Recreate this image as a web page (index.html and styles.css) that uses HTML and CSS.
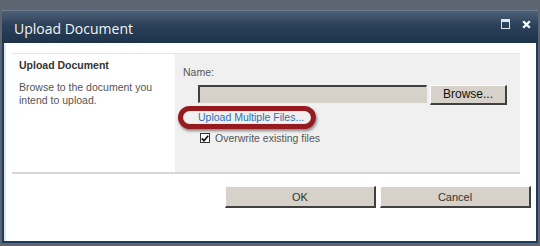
FILE: index.html
```html
<!DOCTYPE html>
<html lang="en">

<head>
    <meta charset="UTF-8">
    <title>Upload Document</title>
    <link rel="stylesheet" href="styles.css">
</head>

<body>

    <div class="dialog">
        <!-- Title bar -->
        <div class="titlebar">
            <span class="title">Upload Document</span>
            <span class="title-icons">
                <svg width="9" height="10" viewBox="0 0 9 10">
                    <rect x="0.5" y="0.5" width="8" height="9" fill="none" stroke="#dfe5eb" stroke-width="1"/>
                    <rect x="0.5" y="0.5" width="8" height="2.5" fill="#dfe5eb"/>
                </svg>
                <svg width="9" height="9" viewBox="0 0 9 9">
                    <path d="M1.2 1.2 L7.8 7.8 M7.8 1.2 L1.2 7.8" stroke="#ffffff" stroke-width="2.3"/>
                </svg>
            </span>
        </div>

        <div class="content">
            <div class="section">
                <div class="section-desc">
                    <h3>Upload Document</h3>
                    <p>Browse to the document you intend to upload.</p>
                </div>
                <div class="section-body">
                    <label for="file">Name:</label>
                    <div class="file-row">
                        <input type="text" id="file" class="file-box">
                        <button class="browse">Browse...</button>
                    </div>
                    <div class="link-row">
                        <a href="#" class="multi-link">Upload Multiple Files...</a>
                        <span class="highlight"></span>
                    </div>
                    <div class="check-row">
                        <span class="check">
                            <svg width="8" height="7" viewBox="0 0 8 7">
                                <path d="M0.8 3.4 L3 5.7 L7.2 0.8" fill="none" stroke="#111" stroke-width="1.7"/>
                            </svg>
                        </span>
                        <span>Overwrite existing files</span>
                    </div>
                </div>
            </div>

            <div class="actions">
                <button class="action">OK</button>
                <button class="action">Cancel</button>
            </div>
        </div>
    </div>

</body>

</html>
```

FILE: styles.css
```css
body {
    margin: 0;
    padding: 10px 0 0 2px;
    height: 246px;
    box-sizing: border-box;
    overflow: hidden;
    background: #5e6570;
    font-family: "Liberation Sans", Tahoma, Arial, sans-serif;
    font-size: 10.5px;
    color: #4a4a4a;
}

.dialog {
    width: 536px;
    height: 233px;
    box-sizing: border-box;
    border: 2px solid #1d3b5a;
    border-top: none;
    background: #fff;
    display: flex;
    flex-direction: column;
}

.titlebar {
    height: 33px;
    box-sizing: border-box;
    margin: 0 -2px;
    padding: 0 7px 0 12px;
    display: flex;
    align-items: center;
    justify-content: space-between;
    background: linear-gradient(#4d6076, #2b4159 45%, #1d334c);
    border-top: 1px solid #6b7d90;
}

.title {
    font-family: "Open Sans", sans-serif;
    font-size: 14px;
    color: #f2f4f7;
    padding-top: 2px;
}

.title-icons {
    display: flex;
    gap: 12px;
    align-items: center;
    align-self: flex-start;
    margin-top: 8px;
}

.content {
    flex: 1;
    padding: 0 5px 0 6px;
    border-left: 2px solid #dde9f4;
}

.section {
    display: flex;
    margin: 10px 11px 0 0;
    border-top: 1px solid #e6e6e6;
    border-bottom: 2px solid #d6d6d6;
    height: 118px;
}

.section-desc {
    width: 163px;
    padding: 5px 7px;
    box-sizing: border-box;
}

.section-desc h3 {
    margin: 0 0 10px;
    font-size: 10.5px;
    color: #333;
}

.section-desc p {
    margin: 0;
    line-height: 13px;
    color: #555;
}

.section-body {
    flex: 1;
    background: #f0f0f0;
    padding: 12px 0 0 8px;
}

label {
    display: block;
    line-height: 13px;
    color: #555;
}

.file-row {
    display: flex;
    align-items: flex-start;
    gap: 3px;
    margin: 6px 0 0 15px;
}

.file-box {
    width: 229px;
    height: 18px;
    box-sizing: border-box;
    background: #d6d2ca;
    border: 1px solid #d6d2ca;
    border-top: 2px solid #404040;
    border-left: 2px solid #404040;
    padding: 0;
}

.browse,
.action {
    background: #d6d2ca;
    border: 1px solid #fbfbfb;
    border-right: 2px solid #404040;
    border-bottom: 2px solid #404040;
    font-family: "Liberation Sans", Arial, sans-serif;
    color: #111;
}

.browse {
    width: 77px;
    height: 20px;
    font-size: 12px;
    padding: 0 0 1px;
}

.link-row {
    position: relative;
    margin: 6px 0 0 15px;
    height: 13px;
    line-height: 13px;
}

.multi-link {
    color: #2a72b6;
    text-decoration: none;
}

.highlight {
    position: absolute;
    left: -20px;
    top: -5px;
    width: 128px;
    height: 13px;
    border: 5px solid #951b1f;
    border-radius: 12px;
    box-shadow: 1px 2px 3px rgba(0, 0, 0, 0.45), inset 0 0 1px rgba(0, 0, 0, 0.35);
}

.check-row {
    display: flex;
    align-items: center;
    gap: 5px;
    margin: 8px 0 0 17px;
    color: #555;
}

.check {
    width: 8px;
    height: 8px;
    border: 1px solid #333;
    background: #fff;
    display: flex;
    align-items: center;
    justify-content: center;
}

.actions {
    display: flex;
    justify-content: flex-end;
    gap: 4px;
    margin-top: 12px;
}

.action {
    width: 151px;
    height: 22px;
    font-size: 11px;
    color: #333;
}
```
